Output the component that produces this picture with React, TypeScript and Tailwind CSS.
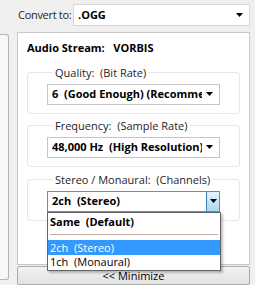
import React from 'react';

const font = { fontFamily: '"Open Sans", "Noto Sans", Arial, sans-serif' };

function Arrow() {
  return (
    <svg width="7" height="4" viewBox="0 0 7 4" className="shrink-0">
      <path d="M0 0h7L3.5 4z" fill="#000" />
    </svg>
  );
}

function Combo({ value }: { value: string }) {
  return (
    <div className="flex h-[21px] items-center justify-between gap-[4px] border border-[#c5c5c5] bg-white pl-[4px] pr-[6px]">
      <span className="min-w-0 overflow-hidden whitespace-pre font-bold">{value}</span>
      <Arrow />
    </div>
  );
}

function Group({ label, children }: { label: string; children: React.ReactNode }) {
  return (
    <fieldset className="min-w-0 rounded-[3px] border border-[#e6e6e6] px-[19px] pb-[8px] pt-[4px]">
      <legend className="ml-[6px] whitespace-pre px-[2px] leading-[14px] text-[#1e1e1e]">{label}</legend>
      {children}
    </fieldset>
  );
}

export default function App() {
  return (
    <div
      className="relative flex h-[285px] w-[255px] overflow-hidden bg-[#f0f0f0] text-[11px] text-black"
      style={font}
    >
      {/* left side panel edge */}
      <div className="pt-[34px]">
        <div className="h-[246px] w-[9px] rounded-r-[3px] border border-l-0 border-[#b4b4b4] bg-[#f8f8f8]" />
      </div>

      <div className="ml-[8px] flex w-[233px] flex-col">
        <div className="flex h-[32px] items-start pt-[4px]">
          <span className="mt-[3px] w-[56px] whitespace-pre pl-[1px] tracking-[-0.3px] text-[#1e1e1e]">Convert to:</span>
          <div className="flex h-[22px] flex-1 items-center justify-between border border-[#d7d7d7] bg-white pl-[4px] pr-[6px]">
            <span className="font-bold">.OGG</span>
            <Arrow />
          </div>
        </div>

        <div className="flex h-[234px] flex-col border border-[#c8c8c8] bg-white px-[9px]">
          <div className="mt-[6px] h-[18px] whitespace-pre font-bold leading-[18px]">Audio Stream:   VORBIS</div>

          <div className="mt-[9px]">
            <Group label="Quality:  (Bit Rate)">
              <Combo value="6  (Good Enough) (Recommended)" />
            </Group>
          </div>

          <div className="mt-[5px]">
            <Group label="Frequency:  (Sample Rate)">
              <Combo value="48,000 Hz  (High Resolution)" />
            </Group>
          </div>

          <div className="relative mt-[6px]">
            <Group label="Stereo / Monaural:  (Channels)">
              <div className="flex h-[21px] items-center justify-between border border-[#5a8fc0] bg-white pl-[4px]">
                <span className="whitespace-pre font-bold">2ch  (Stereo)</span>
                <div className="flex h-full w-[13px] items-center justify-center border-l border-[#3c7fb1] bg-gradient-to-b from-[#e5f4fc] to-[#a7d9f5]">
                  <Arrow />
                </div>
              </div>
            </Group>

            {/* open dropdown list */}
            <div className="absolute left-[20px] top-[39px] z-10 w-[174px] border border-[#646464] bg-white shadow-[2px_2px_2px_rgba(0,0,0,0.25)]">
              <div className="h-[17px] whitespace-pre pl-[2px] font-bold leading-[17px]">Same  (Default)</div>
              <div className="flex h-[10px] items-center px-[2px]">
                <div className="h-px w-full bg-[#c9a8a0]" />
              </div>
              <div className="h-[15px] whitespace-pre bg-[#3399ff] pl-[2px] leading-[15px] text-white">2ch  (Stereo)</div>
              <div className="h-[15px] whitespace-pre pl-[2px] leading-[14px]">1ch  (Monaural)</div>
            </div>
          </div>
        </div>

        <button className="mt-[1px] flex h-[19px] items-center justify-center rounded-[2px] border border-[#acacac] bg-gradient-to-b from-[#f2f2f2] to-[#e2e2e2] leading-none">
          {'<< Minimize'}
        </button>
      </div>
    </div>
  );
}
